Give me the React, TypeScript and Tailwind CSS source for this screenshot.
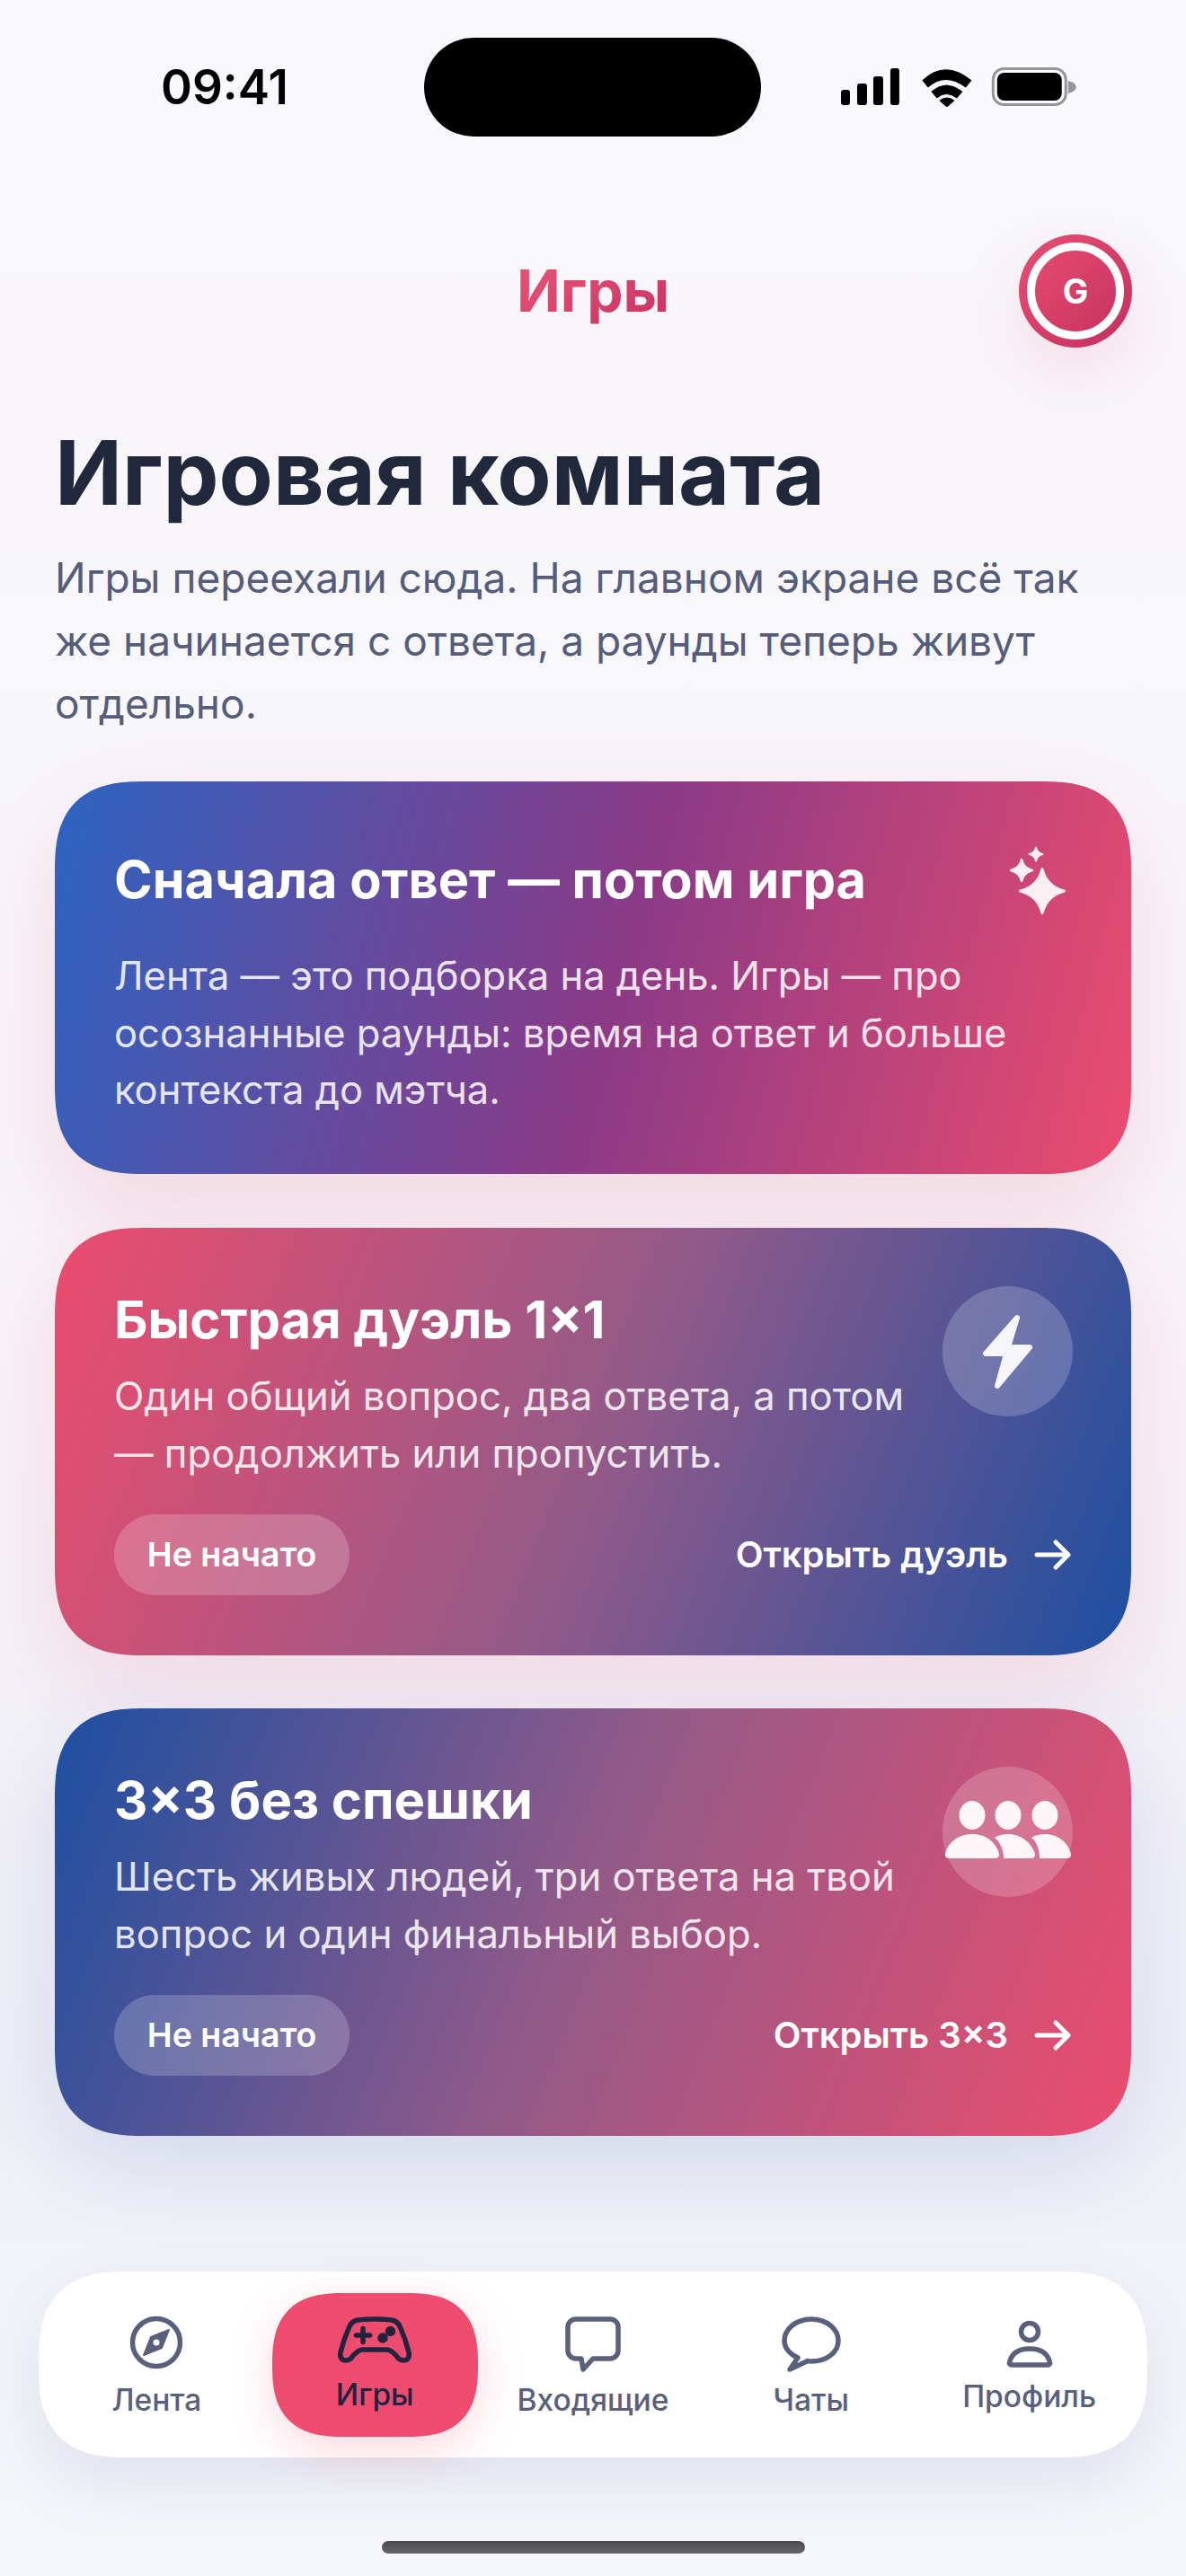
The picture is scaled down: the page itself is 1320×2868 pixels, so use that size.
const star = (cx: number, cy: number, r: number, k: number) =>
  `M${cx} ${cy - r}Q${cx + k} ${cy - k} ${cx + r} ${cy}Q${cx + k} ${cy + k} ${cx} ${cy + r}Q${cx - k} ${cy + k} ${cx - r} ${cy}Q${cx - k} ${cy - k} ${cx} ${cy - r}Z`;

function StatusBar() {
  return (
    <div className="mt-[42px] flex h-[110px] items-center justify-between pl-[179px] pr-[122px]">
      <span className="w-[293px] text-[53px] font-semibold leading-none text-black">09:41</span>
      <div className="h-[110px] w-[376px] rounded-[55px] bg-black" />
      <svg width="262" height="44" viewBox="0 0 262 44" className="ml-[89px]">
        <rect x="0" y="25" width="10" height="17" rx="3" fill="#000" />
        <rect x="18" y="18" width="11" height="24" rx="3" fill="#000" />
        <rect x="36" y="10" width="11" height="32" rx="3" fill="#000" />
        <rect x="55" y="1" width="10" height="41" rx="3" fill="#000" />
        <path d="M91 14.5 Q116 -9 145 14.5 L139 22 Q116 5 97 22Z" fill="#000" stroke="#000" strokeLinejoin="round" />
        <path d="M101 27 Q117 13 135 27 L129 34 Q117 25 107 34Z" fill="#000" stroke="#000" strokeLinejoin="round" />
        <path d="M110 37 Q118 31 126 37 L118 44Z" fill="#000" stroke="#000" strokeLinejoin="round" />
        <rect x="169.5" y="1.5" width="81" height="40" rx="12" fill="none" stroke="#95959a" strokeWidth="3" />
        <rect x="174" y="6" width="72" height="31" rx="8" fill="#000" />
        <path d="M253 15 Q262 17 262 22 Q262 27 253 29Z" fill="#95959a" />
      </svg>
    </div>
  );
}

function Pill({ tint }: { tint: string }) {
  return (
    <span className={`flex h-[90px] w-[262px] items-center justify-center rounded-[45px] text-[37.5px] font-semibold text-white ${tint}`}>
      Не начато
    </span>
  );
}

function ArrowR() {
  return (
    <svg width="42" height="42" viewBox="0 0 42 42" fill="none" stroke="#fff" strokeWidth="5" strokeLinecap="round" strokeLinejoin="round">
      <path d="M3 21H38M24 7l14 14-14 14" />
    </svg>
  );
}

function GameCard({ gradient, shadow, title, lines, cta, icon }: { gradient: string; shadow: string; title: string; lines: string[]; cta: string; icon: React.ReactNode }) {
  return (
    <div className={`relative h-[476px] rounded-[100px] px-[66px] pt-[66px] [corner-shape:superellipse(1.4)] ${gradient} ${shadow}`}>
      <h2 className="text-[58px] font-bold leading-[72px] text-white">{title}</h2>
      <p className="mt-[18px] text-[43.6px] font-normal leading-[64px] text-white/85">
        {lines.map((l) => (
          <span key={l} className="block">{l}</span>
        ))}
      </p>
      <div className="mt-[35px] flex items-center justify-between">
        <Pill tint="bg-white/20" />
        <span className="flex items-center gap-[29px] text-[40px] font-semibold text-white">
          {cta}
          <ArrowR />
        </span>
      </div>
      <div className="absolute right-[65px] top-[65px] flex h-[145px] w-[145px] items-center justify-center rounded-full bg-white/20">
        {icon}
      </div>
    </div>
  );
}

function Bolt() {
  return (
    <svg width="60" height="88" viewBox="0 0 60 88" fill="#f5f5fa" stroke="#f5f5fa" strokeWidth="6" strokeLinejoin="round">
      <path d="M40 6 5 46H28L18 82 54 39H30Z" />
    </svg>
  );
}

function People() {
  return (
    <svg width="144" height="64" viewBox="0 0 144 64" fill="#fdf5f8" className="mt-[-6px]">
      <ellipse cx="32" cy="16" rx="14.5" ry="16" />
      <ellipse cx="72" cy="16" rx="14.5" ry="16" />
      <ellipse cx="113" cy="16" rx="14.5" ry="16" />
      <path d="M6 64a4 4 0 0 1-4-5C5 46 17 37 32 37S59 46 62 59a4 4 0 0 1-4 5Z" />
      <path d="M67 64C67 54 63 46 57 41C61 38 67 37 72 37C86 37 98 46 102 59a4 4 0 0 1-4 5Z" />
      <path d="M107 64C107 54 104 46 98 41C102 38 108 37 113 37C127 37 139 46 142 59a4 4 0 0 1-4 5Z" />
    </svg>
  );
}

function NavItem({ label, icon, active, labelClass }: { label: string; icon: React.ReactNode; active?: boolean; labelClass: string }) {
  return (
    <div className="flex flex-col items-center">
      <div className="flex h-[64px] items-center justify-center">{icon}</div>
      <span className={`text-[33.5px] font-medium leading-[40px] ${active ? "text-[#20243f]" : "text-[#5a607c]"} ${labelClass}`}>{label}</span>
    </div>
  );
}

const navStroke = { fill: "none", stroke: "#5a607c", strokeWidth: 5.5, strokeLinecap: "round" as const, strokeLinejoin: "round" as const };

export default function App() {
  return (
    <div
      className="relative h-[2868px] w-[1320px] overflow-hidden bg-[linear-gradient(180deg,#f8f8fd_0%,#f8f8fd_8%,#f9f5f9_14%,#f8f7fb_25%,#f7f2f7_55%,#eef0f7_80%,#f6f7fb_100%)]"
      style={{ fontFamily: "Inter, 'Noto Sans', sans-serif" }}
    >
      <StatusBar />

      <header className="relative mt-[109px] flex h-[126px] items-center justify-center">
        <span className="bg-gradient-to-br from-[#ec5878] to-[#c52f60] bg-clip-text text-[64px] font-bold text-transparent">Игры</span>
        <div className="absolute right-[60px] top-0 flex h-[126px] w-[126px] items-center justify-center rounded-full bg-gradient-to-br from-[#e94f73] to-[#c42e5f] shadow-[0_24px_70px_rgba(220,60,100,0.13)]">
          <div className="flex h-[108px] w-[108px] items-center justify-center rounded-full border-[9px] border-white text-[38px] font-bold text-white">G</div>
        </div>
      </header>

      <main className="px-[61px]">
        <h1 className="mt-[82px] text-[98.5px] font-bold leading-[116px] text-[#22283c]">Игровая комната</h1>
        <p className="mt-[23px] text-[46px] leading-[70px] text-[#565d7c]">
          Игры переехали сюда. На главном экране всё так
          <br />
          же начинается с ответа, а раунды теперь живут
          <br />
          отдельно.
        </p>

        <section className="relative mt-[52px] h-[437px] rounded-[100px] bg-[linear-gradient(105deg,#2c64c2_0%,#8b3a87_52%,#ec4c6e_100%)] px-[66px] pt-[73px] shadow-[0_36px_100px_rgba(225,70,110,0.16)] [corner-shape:superellipse(1.4)]">
          <h2 className="text-[57.7px] font-bold leading-[72px] text-white">Сначала ответ — потом игра</h2>
          <p className="mt-[40px] text-[43.5px] leading-[63.5px] text-white/85">
            Лента — это подборка на день. Игры — про
            <br />
            осознанные раунды: время на ответ и больше
            <br />
            контекста до мэтча.
          </p>
          <svg className="absolute right-[68px] top-[60px]" width="72" height="92" viewBox="0 0 72 92" fill="#fbeff3" stroke="#fbeff3" strokeWidth="3" strokeLinejoin="round">
            <path d={star(41, 62, 24.5, 5)} />
            <path d={star(18, 39, 12, 2.2)} strokeWidth="2.5" />
            <path d={star(34, 21, 7.5, 1.2)} strokeWidth="2" />
          </svg>
        </section>

        <div className="mt-[60px] flex flex-col gap-[59px]">
          <GameCard
            gradient="bg-[linear-gradient(112deg,#ec4c6e_0%,#955a88_50%,#1c4fa2_100%)]"
            shadow="shadow-[0_36px_100px_rgba(225,70,110,0.14)]"
            title="Быстрая дуэль 1×1"
            lines={["Один общий вопрос, два ответа, а потом", "— продолжить или пропустить."]}
            cta="Открыть дуэль"
            icon={<Bolt />}
          />
          <GameCard
            gradient="bg-[linear-gradient(112deg,#1c4fa2_0%,#955a88_50%,#ec4c6e_100%)]"
            shadow="shadow-[0_36px_100px_rgba(60,80,160,0.14)]"
            title="3×3 без спешки"
            lines={["Шесть живых людей, три ответа на твой", "вопрос и один финальный выбор."]}
            cta="Открыть 3×3"
            icon={<People />}
          />
        </div>
      </main>

      <nav className="mx-[43px] mt-[151px] grid h-[207px] grid-cols-5 rounded-[100px] bg-white/95 px-[10px] shadow-[0_30px_70px_rgba(70,90,150,0.12)] [corner-shape:superellipse(1.4)]">
        <div className="flex items-center justify-center pt-[2px]">
          <NavItem
            label="Лента"
            labelClass="mt-[12px]"
            icon={
              <svg width="62" height="62" viewBox="0 0 62 62" {...navStroke}>
                <circle cx="31" cy="31" r="26.5" />
                <path d="M45 17 37 37 17 45 25 25Z" fill="#5a607c" strokeWidth="2" />
                <circle cx="31" cy="31" r="3.5" fill="#fff" stroke="none" />
              </svg>
            }
          />
        </div>
        <div className="relative flex items-center justify-center">
          <div className="absolute left-[7px] top-[24px] h-[160px] w-[229px] rounded-[80px] bg-[#ee4c6e] shadow-[0_14px_50px_rgba(238,76,110,0.22)] [corner-shape:superellipse(1.4)]" />
          <div className="relative mt-[-6px]">
            <NavItem
              active
              label="Игры"
              labelClass="mt-[8px]"
              icon={
                <svg width="86" height="56" viewBox="0 0 86 56" fill="none" stroke="#20243f" strokeWidth="5.5" strokeLinecap="round" strokeLinejoin="round">
                  <path d="M24 5C34 3.5 52 3.5 62 5C67 6 69 8 71 12C75 21 79 33 81 41C82.5 47 79 50 75 50C71.5 50 69 48 66.5 44L63 41C61 39 59 38 56 38H30C27 38 25 39 23 41L19.5 44C17 48 14.5 50 11 50C7 50 3.5 47 5 41C7 33 11 21 15 12C17 8 19 6 24 5Z" />
                  <path d="M30 14.5V29.5M22.5 22H37.5" />
                  <circle cx="52" cy="25" r="3" fill="#20243f" />
                  <circle cx="60.5" cy="17.5" r="3" fill="#20243f" />
                </svg>
              }
            />
          </div>
        </div>
        <div className="flex items-center justify-center pt-[4px]">
          <NavItem
            label="Входящие"
            labelClass="mt-[10px]"
            icon={
              <svg width="62" height="62" viewBox="0 0 62 62" {...navStroke}>
                <path d="M12 3H50C55 3 59 7 59 12V38C59 43 55 47 50 47H31L20 59 18 47H12C7 47 3 43 3 38V12C3 7 7 3 12 3Z" />
              </svg>
            }
          />
        </div>
        <div className="flex items-center justify-center pt-[4px]">
          <NavItem
            label="Чаты"
            labelClass="mt-[10px]"
            icon={
              <svg width="66" height="62" viewBox="0 0 66 62" {...navStroke}>
                <path d="M33 3C50 3 63 14 63 27C63 40 50 50 33 50C31 50 30 50 29 49.5L9 59L18 46C9 42 3 35 3 27C3 14 16 3 33 3Z" />
              </svg>
            }
          />
        </div>
        <div className="flex items-center justify-center">
          <NavItem
            label="Профиль"
            labelClass="mt-[6px]"
            icon={
              <svg width="52" height="54" viewBox="0 0 52 54" {...navStroke}>
                <circle cx="26" cy="13" r="9.5" />
                <path d="M6 50C4 50 3 48.6 3.6 47C6 37 14 32 26 32C38 32 46 37 48.4 47C49 48.6 48 50 46 50Z" />
              </svg>
            }
          />
        </div>
      </nav>

      <div className="mx-auto mt-[93px] h-[14px] w-[471px] rounded-[7px] bg-gradient-to-b from-[#4a4a4e] to-[#66666c]" />
    </div>
  );
}
